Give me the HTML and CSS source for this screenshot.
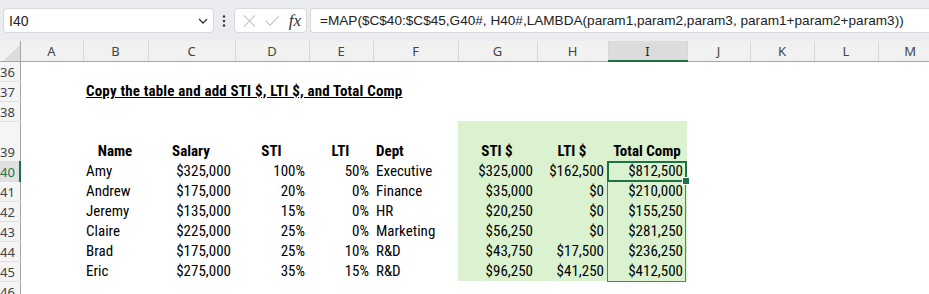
FILE: index.html
```html
<!DOCTYPE html>
<html lang="en">
<head>
  <meta charset="UTF-8">
  <title>Compensation sheet</title>
  <link rel="stylesheet" href="styles.css">
</head>
<body>

<div class="toolbar">
  <div class="namebox">
    <span>I40</span>
    <svg class="chevron" width="10" height="6" viewBox="0 0 10 6"><path d="M1 1 L5 5 L9 1" fill="none" stroke="#333" stroke-width="1.3"/></svg>
  </div>
  <svg class="dots" width="4" height="12" viewBox="0 0 4 12"><circle cx="2" cy="1.5" r="1.2" fill="#333"/><circle cx="2" cy="6" r="1.2" fill="#333"/><circle cx="2" cy="10.5" r="1.2" fill="#333"/></svg>
  <div class="fxbox">
    <svg width="14" height="14" viewBox="0 0 14 14"><path d="M1 1 L13 13 M13 1 L1 13" stroke="#c4c4c4" stroke-width="1.2"/></svg>
    <svg width="16" height="12" viewBox="0 0 16 12"><path d="M1 6 L5.5 10.5 L15 1" fill="none" stroke="#c4c4c4" stroke-width="1.2"/></svg>
    <span class="fx">fx</span>
  </div>
  <div class="formula">=MAP($C$40:$C$45,G40#, H40#,LAMBDA(param1,param2,param3, param1+param2+param3))</div>
</div>

<table class="sheet">
  <colgroup>
    <col style="width:20px"><col style="width:63px"><col style="width:65px"><col style="width:87px">
    <col style="width:74px"><col style="width:64px"><col style="width:85px"><col style="width:79px">
    <col style="width:71px"><col style="width:79px"><col style="width:63px"><col style="width:64px">
    <col style="width:64px"><col style="width:64px">
  </colgroup>
  <tr class="colhead">
    <th class="corner"></th><th>A</th><th>B</th><th>C</th><th>D</th><th>E</th><th>F</th><th>G</th><th>H</th><th class="active">I</th><th>J</th><th>K</th><th>L</th><th>M</th>
  </tr>
  <tr>
    <th class="rowhead">36</th><td></td><td></td><td></td><td></td><td></td><td></td><td></td><td></td><td></td><td></td><td></td><td></td><td></td>
  </tr>
  <tr>
    <th class="rowhead">37</th><td></td><td class="title" colspan="5"><span>Copy the table and add STI $, LTI $, and Total Comp</span></td><td></td><td></td><td></td><td></td><td></td><td></td><td></td>
  </tr>
  <tr>
    <th class="rowhead">38</th><td></td><td></td><td></td><td></td><td></td><td></td><td></td><td></td><td></td><td></td><td></td><td></td><td></td>
  </tr>
  <tr class="tall">
    <th class="rowhead">39</th><td></td>
    <td class="hd center">Name</td><td class="hd center">Salary</td><td class="hd center">STI</td><td class="hd center">LTI</td><td class="hd">Dept</td>
    <td class="hd center fill">STI $</td><td class="hd center fill">LTI $</td><td class="hd center fill">Total Comp</td>
    <td></td><td></td><td></td><td></td>
  </tr>
  <tr>
    <th class="rowhead active">40</th><td></td>
    <td>Amy</td><td class="num">$325,000</td><td class="num">100%</td><td class="num">50%</td><td>Executive</td>
    <td class="num fill">$325,000</td><td class="num fill">$162,500</td>
    <td class="num fill selected"><div class="spill"></div><div class="cursor"><i class="handle"></i></div>$812,500</td>
    <td></td><td></td><td></td><td></td>
  </tr>
  <tr>
    <th class="rowhead">41</th><td></td>
    <td>Andrew</td><td class="num">$175,000</td><td class="num">20%</td><td class="num">0%</td><td>Finance</td>
    <td class="num fill">$35,000</td><td class="num fill">$0</td><td class="num fill">$210,000</td>
    <td></td><td></td><td></td><td></td>
  </tr>
  <tr>
    <th class="rowhead">42</th><td></td>
    <td>Jeremy</td><td class="num">$135,000</td><td class="num">15%</td><td class="num">0%</td><td>HR</td>
    <td class="num fill">$20,250</td><td class="num fill">$0</td><td class="num fill">$155,250</td>
    <td></td><td></td><td></td><td></td>
  </tr>
  <tr>
    <th class="rowhead">43</th><td></td>
    <td>Claire</td><td class="num">$225,000</td><td class="num">25%</td><td class="num">0%</td><td>Marketing</td>
    <td class="num fill">$56,250</td><td class="num fill">$0</td><td class="num fill">$281,250</td>
    <td></td><td></td><td></td><td></td>
  </tr>
  <tr>
    <th class="rowhead">44</th><td></td>
    <td>Brad</td><td class="num">$175,000</td><td class="num">25%</td><td class="num">10%</td><td>R&amp;D</td>
    <td class="num fill">$43,750</td><td class="num fill">$17,500</td><td class="num fill">$236,250</td>
    <td></td><td></td><td></td><td></td>
  </tr>
  <tr>
    <th class="rowhead">45</th><td></td>
    <td>Eric</td><td class="num">$275,000</td><td class="num">35%</td><td class="num">15%</td><td>R&amp;D</td>
    <td class="num fill">$96,250</td><td class="num fill">$41,250</td><td class="num fill">$412,500</td>
    <td></td><td></td><td></td><td></td>
  </tr>
  <tr>
    <th class="rowhead">46</th><td></td><td></td><td></td><td></td><td></td><td></td><td></td><td></td><td></td><td></td><td></td><td></td><td></td>
  </tr>
</table>

</body>
</html>
```

FILE: styles.css
```css
body {
  margin: 0;
  width: 929px;
  height: 294px;
  overflow: hidden;
  background-color: #fff;
  font-family: Roboto, "Liberation Sans", sans-serif;
}
.toolbar {
  display: flex;
  align-items: center;
  height: 41px;
  padding-left: 3px;
  box-sizing: border-box;
  background-color: #eaecef;
  font-family: "Liberation Sans", Arial, sans-serif;
}
.namebox,
.fxbox,
.formula {
  height: 25px;
  box-sizing: border-box;
  background-color: #fff;
  border: 1px solid #d6d8db;
  border-radius: 4px;
  display: flex;
  align-items: center;
}
.namebox {
  width: 211px;
  padding: 0 5px 0 5px;
  justify-content: space-between;
  font-size: 14px;
  color: #222;
}
.dots {
  margin: 0 8px 0 8px;
}
.fxbox {
  width: 73px;
  padding: 0 5px 0 8px;
  gap: 9px;
}
.fx {
  font-family: "Liberation Serif", serif;
  font-style: italic;
  font-size: 17px;
  color: #333;
  margin-left: auto;
}
.formula {
  flex: 1;
  margin-left: 3px;
  padding-left: 9px;
  border-right: none;
  border-radius: 4px 0 0 4px;
  font-size: 13.6px;
  color: #222;
  white-space: nowrap;
}
.sheet {
  border-collapse: collapse;
  table-layout: fixed;
  width: 942px;
  font-size: 15px;
  font-stretch: 75%;
  color: #000;
}
.sheet tr {
  height: 20px;
}
.sheet tr.tall {
  height: 40px;
}
.sheet td {
  padding: 0 4px 1px 3px;
  line-height: 18px;
  vertical-align: bottom;
  white-space: nowrap;
  overflow: visible;
}
.colhead th {
  height: 19px;
  padding: 0;
  background-color: #f1f1f1;
  border-left: 1px solid #d7d7d7;
  border-bottom: 1px solid #a6a6a6;
  font-family: "Noto Sans", sans-serif;
  font-stretch: 100%;
  font-size: 13px;
  font-weight: normal;
  color: #444;
}
.colhead th.corner {
  border-left: none;
  border-right: 1px solid #a6a6a6;
  background: linear-gradient(135deg, #f1f1f1 60%, #dcdcdc 60%);
}
.colhead th.active {
  background-color: #dcdcdc;
  border-bottom: 2px solid #1e7145;
  color: #222;
}
.rowhead {
  padding: 0 5px 0 0;
  text-align: right;
  background-color: #f5f5f5;
  border-right: 1px solid #a6a6a6;
  border-bottom: 1px solid #dedede;
  font-family: "Noto Sans", sans-serif;
  font-stretch: 100%;
  font-size: 13px;
  font-weight: normal;
  color: #444;
  overflow: hidden;
  line-height: 18px;
  vertical-align: bottom;
}
.rowhead.active {
  background-color: #e1e1e1;
  border-right: 2px solid #1e7145;
  color: #1e7145;
}
.title span {
  font-weight: bold;
  letter-spacing: 0.18px;
  text-decoration: underline;
}
.hd {
  font-weight: bold;
}
.center {
  text-align: center;
}
.num {
  text-align: right;
}
.fill {
  background-color: #daf2d0;
}
.selected {
  position: relative;
}
.spill {
  position: absolute;
  left: -1px;
  top: 0;
  width: 79px;
  height: 121px;
  box-sizing: border-box;
  border: 1px solid #3f76d4;
}
.cursor {
  position: absolute;
  left: -1px;
  top: 0;
  width: 80px;
  height: 21px;
  box-sizing: border-box;
  border: 2px solid #1e7145;
}
.handle {
  position: absolute;
  right: -5px;
  bottom: -5px;
  width: 6px;
  height: 6px;
  background-color: #1e7145;
  border: 1px solid #fff;
}
```
